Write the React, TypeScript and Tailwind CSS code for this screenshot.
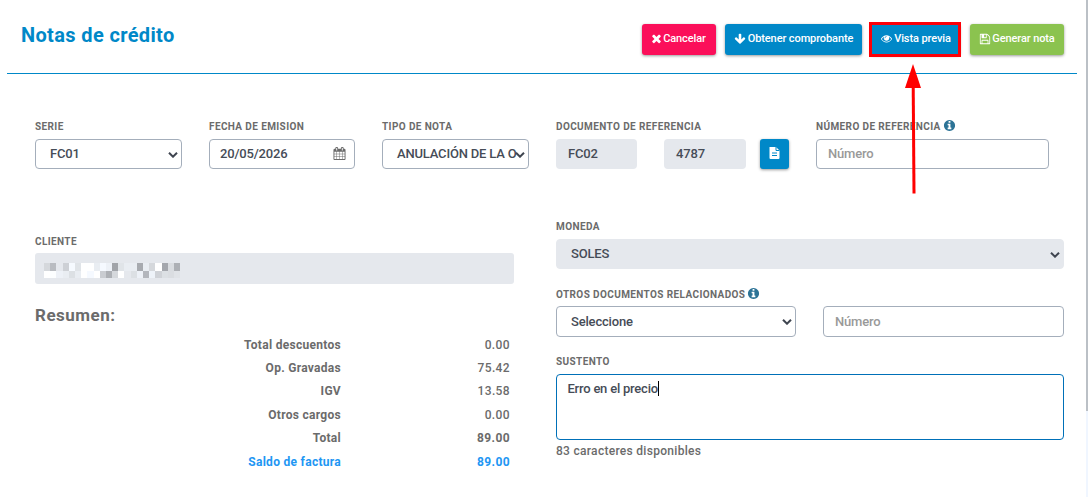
import type { ReactNode } from "react";

const ICONS = {
  times:
    "M1490 1322q0 40-28 68l-136 136q-28 28-68 28t-68-28l-294-294-294 294q-28 28-68 28t-68-28l-136-136q-28-28-28-68t28-68l294-294-294-294q-28-28-28-68t28-68l136-136q28-28 68-28t68 28l294 294 294-294q28-28 68-28t68 28l136 136q28 28 28 68t-28 68l-294 294 294 294q28 28 28 68z",
  arrowDown:
    "M1675 832q0 53-37 90l-651 652q-39 37-91 37-53 0-90-37l-651-652q-38-36-38-90 0-53 38-91l74-75q39-37 91-37 53 0 90 37l294 294v-704q0-52 38-90t90-38h128q52 0 90 38t38 90v704l294-294q37-37 90-37 52 0 91 37l75 75q37 39 37 91z",
  eye: "M1664 960q-152-236-381-353 61 104 61 225 0 185-131.5 316.5t-316.5 131.5-316.5-131.5-131.5-316.5q0-121 61-225-229 117-381 353 133 205 333.5 326.5t434.5 121.5 434.5-121.5 333.5-326.5zm-720-384q0-20-14-34t-34-14q-125 0-214.5 89.5t-89.5 214.5q0 20 14 34t34 14 34-14 14-34q0-86 61-147t147-61q20 0 34-14t14-34zm848 384q0 34-20 69-140 230-376.5 368.5t-499.5 138.5-499.5-139-376.5-368q-20-35-20-69t20-69q140-229 376.5-368t499.5-139 499.5 139 376.5 368q20 35 20 69z",
  save: "M512 1536h768v-384h-768v384zm896 0h128v-896q0-14-10-38.5t-20-34.5l-281-281q-10-10-34-20t-39-10v416q0 40-28 68t-68 28h-576q-40 0-68-28t-28-68v-416h-128v1280h128v-416q0-40 28-68t68-28h832q40 0 68 28t28 68v416zm-384-928v-320q0-13-9.5-22.5t-22.5-9.5h-192q-13 0-22.5 9.5t-9.5 22.5v320q0 13 9.5 22.5t22.5 9.5h192q13 0 22.5-9.5t9.5-22.5zm640 32v928q0 40-28 68t-68 28h-1344q-40 0-68-28t-28-68v-1344q0-40 28-68t68-28h928q40 0 88 20t76 48l280 280q28 28 48 76t20 88z",
  calendar:
    "M192 1664h288v-288h-288v288zm352 0h320v-288h-320v288zm-352-352h288v-320h-288v320zm352 0h320v-320h-320v320zm-352-384h288v-288h-288v288zm736 736h320v-288h-320v288zm-384-736h320v-288h-320v288zm768 736h288v-288h-288v288zm-384-352h320v-320h-320v320zm-352-864v-288q0-13-9.5-22.5t-22.5-9.5h-64q-13 0-22.5 9.5t-9.5 22.5v288q0 13 9.5 22.5t22.5 9.5h64q13 0 22.5-9.5t9.5-22.5zm736 864h288v-320h-288v320zm-384-384h320v-288h-320v288zm384 0h288v-288h-288v288zm32-480v-288q0-13-9.5-22.5t-22.5-9.5h-64q-13 0-22.5 9.5t-9.5 22.5v288q0 13 9.5 22.5t22.5 9.5h64q13 0 22.5-9.5t9.5-22.5zm384-64v1280q0 52-38 90t-90 38h-1408q-52 0-90-38t-38-90v-1280q0-52 38-90t90-38h128v-96q0-66 47-113t113-47h64q66 0 113 47t47 113v96h384v-96q0-66 47-113t113-47h64q66 0 113 47t47 113v96h128q52 0 90 38t38 90z",
  info: "M1152 1376v-160q0-14-9-23t-23-9h-96v-512q0-14-9-23t-23-9h-320q-14 0-23 9t-9 23v160q0 14 9 23t23 9h96v320h-96q-14 0-23 9t-9 23v160q0 14 9 23t23 9h448q14 0 23-9t9-23zm-128-896v-160q0-14-9-23t-23-9h-192q-14 0-23 9t-9 23v160q0 14 9 23t23 9h192q14 0 23-9t9-23zm640 416q0 209-103 385.5t-279.5 279.5-385.5 103-385.5-103-279.5-279.5-103-385.5 103-385.5 279.5-279.5 385.5-103 385.5 103 279.5 279.5 103 385.5z",
};

function Icon({ name, className }: { name: keyof typeof ICONS; className: string }) {
  return (
    <svg viewBox="0 0 1792 1792" fill="currentColor" className={`shrink-0 ${className}`}>
      <path d={ICONS[name]} />
    </svg>
  );
}

const BUTTON =
  "flex items-center justify-center rounded-[3px] text-[11px] font-medium tracking-[-0.1px] text-white shadow-[0_1px_3px_rgba(0,0,0,0.4)] whitespace-nowrap";

const FIELD =
  "block w-full rounded-[4px] border text-[13px] font-medium tracking-[-0.18px] text-[#464c57] outline-none";

function Label({ children, info }: { children: ReactNode; info?: boolean }) {
  return (
    <div className="flex h-[14px] items-center whitespace-nowrap text-[10px] font-bold tracking-[0.39px] text-[#6b6b6b]">
      {children}
      {info && <Icon name="info" className="mb-[1px] ml-[2px] size-[13px] text-[#2c7396]" />}
    </div>
  );
}

function Select({ value, disabled, className = "" }: { value: string; disabled?: boolean; className?: string }) {
  return (
    <div
      className={`${FIELD} relative flex items-center pl-[14px] ${
        disabled ? "border-[#e5e8ed] bg-[#e5e8ed]" : "border-[#a4aebb] bg-white"
      } ${className}`}
    >
      <span className="whitespace-nowrap">{value}</span>
      <svg viewBox="0 0 10 6" className="absolute right-[3px] top-[12px] h-[6px] w-[10px]" fill="none">
        <path d="M1 0.7l4 4 4-4" stroke="#3f4550" strokeWidth="2" />
      </svg>
    </div>
  );
}

// Pixelated client name, one entry per mosaic tile.
const MOSAIC = [
  ["#d5d8dc", "#b9bcc1", "#e5e8ed", "#cdd0d5", "#f6faff", "#e0e4e8", "#ffffff", "#ffffff", "#e9edf2", "#f5f9ff", "#edf1f7", "#a1a4a9", "#e0e4e8", "#e9edf2", "#e9edf2", "#a7aaaf", "#e9edf2", "#d5d8dc", "#ffffff", "#a4a7ad", "#d9dce0", "#adb0b5"],
  ["#ffffff", "#fcfeff", "#edf1f7", "#e9edf2", "#dce0e4", "#e9edf2", "#ffffff", "#f5f9ff", "#ffffff", "#c9ccd1", "#adb0b5", "#d5d8dc", "#ffffff", "#e5e8ed", "#dce0e4", "#edf1f7", "#b3b6bc", "#eef3f9", "#cfd2d7", "#dce0e4", "#dadde1", "#e0e3e7"],
];

const TOTALS: { label: string; value: string; tone: string }[] = [
  { label: "Total descuentos", value: "0.00", tone: "font-medium text-[#6b6b6b]" },
  { label: "Op. Gravadas", value: "75.42", tone: "font-medium text-[#6b6b6b]" },
  { label: "IGV", value: "13.58", tone: "font-medium text-[#6b6b6b]" },
  { label: "Otros cargos", value: "0.00", tone: "font-medium text-[#6b6b6b]" },
  { label: "Total", value: "89.00", tone: "font-bold text-[#6b6b6b]" },
  { label: "Saldo de factura", value: "89.00", tone: "font-bold text-[#2196f3]" },
];

export default function App() {
  return (
    <div className="relative flex h-[497px] w-[1088px] overflow-hidden bg-white font-['Roboto',sans-serif]">
      <div className="w-[1086px] shrink-0">
        <header className="ml-[7px] flex h-[74px] w-[1070px] items-start border-b border-[#0088c8] pl-[14px] pt-[24px]">
          <h1 className="mt-[-1px] whitespace-nowrap text-[20px] font-bold leading-[24px] tracking-[0.36px] text-[#0088c8]">
            Notas de crédito
          </h1>
          <div className="ml-auto mr-[13px] flex">
            <button className={`${BUTTON} h-[31px] w-[74px] bg-[#fb0f5a] pb-[1px] pr-[2px]`}>
              <Icon name="times" className="mb-[1px] size-[13px]" />
              Cancelar
            </button>
            <button className={`${BUTTON} ml-[9px] h-[31px] w-[137px] gap-[2px] bg-[#0088c8] pb-[1px]`}>
              <Icon name="arrowDown" className="mb-[1px] size-[12px]" />
              Obtener comprobante
            </button>
            <button className={`${BUTTON} ml-[9px] h-[31px] w-[89px] gap-[2px] bg-[#0088c8] pb-[1px] pl-[1px]`}>
              <Icon name="eye" className="mb-[1px] size-[11px]" />
              Vista previa
            </button>
            <button className={`${BUTTON} ml-[10px] h-[31px] w-[94px] gap-[1px] bg-[#8bc34f] pb-[1px]`}>
              <Icon name="save" className="mb-[1px] size-[12px]" />
              Generar nota
            </button>
          </div>
        </header>

        <section className="flex pl-[35px] pt-[45px]">
          <div className="w-[147px]">
            <Label>SERIE</Label>
            <Select value="FC01" className="mt-[6px] h-[30px]" />
          </div>
          <div className="ml-[27px] w-[146px]">
            <Label>FECHA DE EMISION</Label>
            <div
              className={`${FIELD} mt-[6px] flex h-[30px] items-center justify-between border-[#a4aebb] bg-white pl-[10px] pr-[8px]`}
            >
              <span>20/05/2026</span>
              <Icon name="calendar" className="mb-[1px] size-[13px] text-[#6b6b6b]" />
            </div>
          </div>
          <div className="ml-[27px] w-[147px]">
            <Label>TIPO DE NOTA</Label>
            <Select value="ANULACIÓN DE LA O" className="mt-[6px] h-[30px]" />
          </div>
          <div className="ml-[27px] w-[233px]">
            <Label>DOCUMENTO DE REFERENCIA</Label>
            <div className="mt-[6px] flex text-[13px] font-medium tracking-[-0.18px] text-[#464c57]">
              <div className="flex h-[30px] w-[81px] items-center rounded-[4px] bg-[#e5e8ed] pl-[12px]">FC02</div>
              <div className="ml-[27px] flex h-[30px] w-[82px] items-center rounded-[4px] bg-[#e5e8ed] pl-[12px]">4787</div>
              <button className={`${BUTTON} ml-[14px] h-[30px] w-[29px] bg-[#0088c8] pb-[2px]`}>
                <svg viewBox="0 0 11 12" className="h-[12px] w-[11px]">
                  <path d="M0.5 0H7l3.5 3.5V11a1 1 0 0 1-1 1h-8a1 1 0 0 1-1-1z" fill="#fff" />
                  <path d="M7 0v3.5h3.5M3 6h5M3 8.5h5" stroke="#0088c8" fill="none" />
                </svg>
              </button>
            </div>
          </div>
          <div className="ml-[27px] w-[233px]">
            <Label info>NÚMERO DE REFERENCIA</Label>
            <input
              placeholder="Número"
              className={`${FIELD} mt-[6px] h-[30px] border-[#a4aebb] bg-white px-[11px] pb-[1px] placeholder:text-[#999999]`}
            />
          </div>
        </section>

        <div className="flex pl-[35px]">
          <section className="w-[479px] pt-[65px]">
            <Label>CLIENTE</Label>
            <div className="mt-[5px] h-[31px] rounded-[3px] bg-[#e5e8ed] pl-[9px] pt-[10px]">
              {MOSAIC.map((row, r) => (
                <div key={r} className="flex h-[8px] w-[136px] last:h-[7px]">
                  {row.map((color, c) => (
                    <span key={c} className="flex-1" style={{ backgroundColor: color }} />
                  ))}
                </div>
              ))}
            </div>
            <h2 className="mt-[21px] text-[17px] font-bold leading-[20px] tracking-[0.5px] text-[#6b6b6b]">Resumen:</h2>
            <div className="mt-[8px] text-[12px]">
              {TOTALS.map((row) => (
                <div key={row.label} className={`flex h-[23.4px] items-center ${row.tone}`}>
                  <span className="w-[306px] text-right font-bold tracking-[0.29px]">{row.label}</span>
                  <span className="w-[169px] text-right tracking-[0.38px]">{row.value}</span>
                </div>
              ))}
            </div>
          </section>

          <section className="ml-[42px] w-[508px] pt-[50px]">
            <Label>MONEDA</Label>
            <Select disabled value="SOLES" className="mt-[6px] h-[30px]" />
            <div className="mt-[18px]">
              <Label info>OTROS DOCUMENTOS RELACIONADOS</Label>
            </div>
            <div className="mt-[5px] flex justify-between">
              <div className="w-[240px]">
                <Select value="Seleccione" className="h-[31px]" />
              </div>
              <div className="w-[241px]">
                <input
                  placeholder="Número"
                  className={`${FIELD} h-[31px] border-[#a4aebb] bg-white px-[11px] placeholder:text-[#999999]`}
                />
              </div>
            </div>
            <div className="mt-[17px]">
              <Label>SUSTENTO</Label>
            </div>
            <div className="mt-[6px] flex h-[66px] items-start rounded-[4px] border border-[#0070b8] pl-[10.5px] pt-[6px] text-[13px] font-medium leading-[16px] tracking-[-0.22px] text-[#464c57]">
              Erro en el precio
              <span className="h-[15px] w-px bg-black" />
            </div>
            <p className="mt-[3px] text-[12px] font-medium leading-[16px] tracking-[0.29px] text-[#6b6b6b]">
              83 caracteres disponibles
            </p>
          </section>
        </div>
      </div>

      <div className="w-[2px] shrink-0 bg-[#f0f6ff]">
        <div className="h-[411px] bg-[#bbc0c6]" />
      </div>

      <div className="absolute left-[869px] top-[22px] h-[35px] w-[92px] border-[3px] border-[#fc0008]" />
      <svg viewBox="0 0 18 130" className="absolute left-[904px] top-[64px] h-[130px] w-[18px]">
        <path d="M9 0l8 24H1z" fill="#ff0000" />
        <path d="M9.2 22L10 129.5" stroke="#ff0000" strokeWidth="3" />
      </svg>
    </div>
  );
}
